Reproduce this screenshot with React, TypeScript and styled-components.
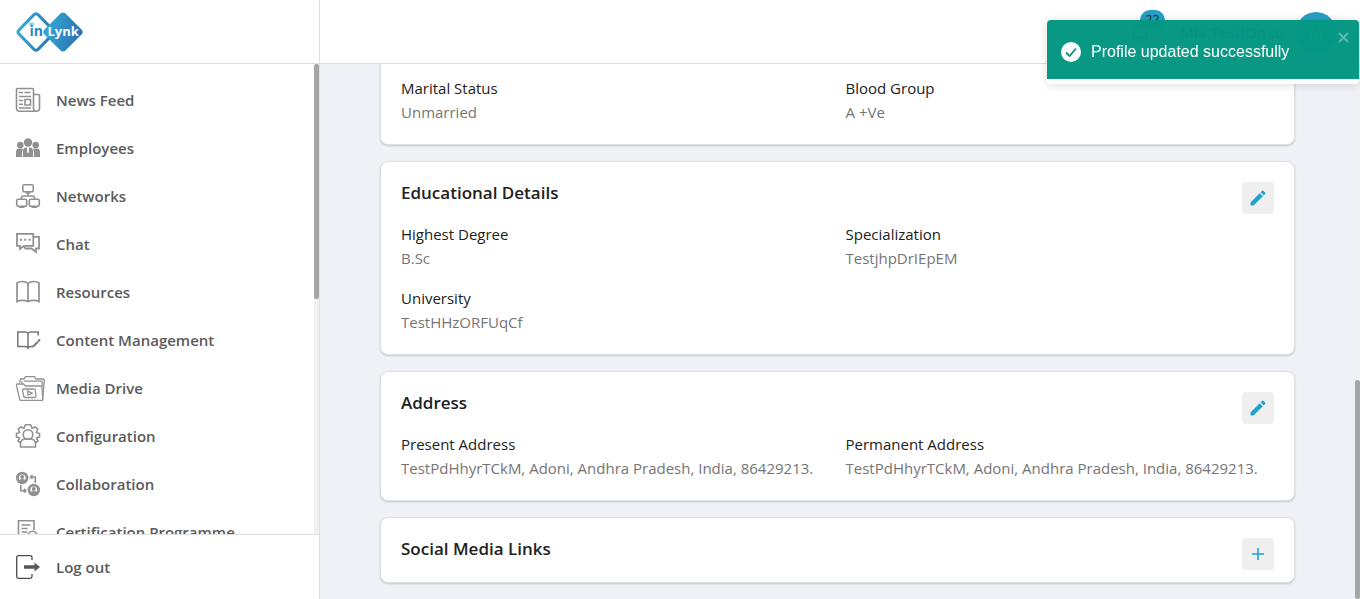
import React from 'react';
import styled, { createGlobalStyle } from 'styled-components';

const GlobalStyle = createGlobalStyle`
  *, *::before, *::after { box-sizing: border-box; }
  body {
    margin: 0;
    font-family: 'Open Sans', 'Noto Sans', sans-serif;
    font-size: 15px;
    line-height: 24px;
    color: #212121;
    background: #f0f1f6;
  }
  h2, p, dl, dt, dd, ul { margin: 0; padding: 0; }
`;

const Shell = styled.div`
  display: flex;
  height: 100vh;
  overflow: hidden;
`;

const Sidebar = styled.aside`
  display: flex;
  flex-direction: column;
  flex: 0 0 320px;
  background: #fff;
  border-right: 1px solid #e0e0e0;
`;

const Brand = styled.a`
  display: flex;
  align-items: center;
  flex: 0 0 64px;
  padding: 0 16px;
  border-bottom: 1px solid #e0e0e0;
`;

const ScrollArea = styled.div`
  display: flex;
  flex: 1;
  min-height: 0;
`;

const Track = styled.div`
  display: flex;
  flex-direction: column;
  flex: 0 0 5px;
  background: #f1f1f1;
`;

const Thumb = styled.div<{ $share: number; $end?: boolean }>`
  height: ${(p) => p.$share}%;
  margin-top: ${(p) => (p.$end ? 'auto' : '0')};
  border-radius: 4px;
  background: #a3a6a4;
`;

const NavList = styled.ul`
  flex: 1;
  padding: 12px 0;
  overflow-y: auto;
  list-style: none;
  scrollbar-width: none;
`;

const NavLink = styled.a`
  display: flex;
  align-items: center;
  gap: 16px;
  height: 48px;
  padding: 0 16px;
  color: #5a5a5a;
  font-weight: 600;
  text-decoration: none;
`;

const NavIcon = styled.svg`
  flex: 0 0 24px;
  width: 24px;
  height: 24px;
  overflow: visible;
  fill: none;
  stroke: #919191;
  stroke-width: 1.6;
`;

const LogoutBar = styled.div`
  flex: 0 0 65px;
  padding: 8px 0;
  border-top: 1px solid #e0e0e0;
`;

const LogoutButton = styled.button`
  display: flex;
  align-items: center;
  gap: 16px;
  width: 100%;
  height: 48px;
  padding: 0 16px;
  border: 0;
  background: none;
  color: #5a5a5a;
  font: inherit;
  font-weight: 600;
`;

const Page = styled.div`
  display: flex;
  flex-direction: column;
  flex: 1;
  min-width: 0;
`;

const TopBar = styled.header`
  display: flex;
  align-items: center;
  justify-content: flex-end;
  gap: 12px;
  flex: 0 0 64px;
  padding: 0 24px;
  background: #fff;
  border-bottom: 1px solid #e0e0e0;
  font-weight: 600;
`;

const BellButton = styled.button`
  position: relative;
  display: flex;
  margin-right: 16px;
  padding: 0;
  border: 0;
  background: none;
  color: #575757;
`;

const Badge = styled.span`
  position: absolute;
  top: -10px;
  left: 12px;
  min-width: 25px;
  height: 20px;
  border-radius: 10px;
  background: #25a0c4;
  color: #212121;
  font: 12px/20px 'Open Sans', sans-serif;
  text-align: center;
`;

const Avatar = styled.span`
  width: 40px;
  height: 40px;
  border-radius: 50%;
  background: #25a0c4;
  color: #fff;
  line-height: 40px;
  text-align: center;
`;

/* Reversed column so that the view opens at the end of the profile. */
const Content = styled.main`
  display: flex;
  flex: 1;
  flex-direction: column-reverse;
  overflow-y: auto;
  scrollbar-width: none;
`;

const Cards = styled.div`
  display: flex;
  flex-direction: column;
  gap: 16px;
  padding: 16px 60px;
`;

const Card = styled.section`
  display: flex;
  flex-direction: column;
  gap: 16px;
  padding: 20px;
  border: 1px solid #dedfe1;
  border-radius: 8px;
  background: #fff;
  box-shadow: 0 1px 2px rgba(0, 0, 0, 0.18);
`;

const CardHeader = styled.div`
  display: flex;
  align-items: flex-start;
  justify-content: space-between;
  height: 24px;
`;

const CardTitle = styled.h2`
  font-size: 17px;
  font-weight: 600;
  line-height: 22px;
`;

const IconButton = styled.button`
  display: grid;
  place-items: center;
  width: 32px;
  height: 32px;
  padding: 0;
  border: 0;
  border-radius: 4px;
  background: #efefef;
  color: #23a2c8;
`;

const Fields = styled.dl`
  display: grid;
  grid-template-columns: 1fr 1fr;
  gap: 16px;
`;

const Value = styled.dd`
  color: #757575;
`;

const Toast = styled.div`
  position: fixed;
  top: 20px;
  right: 1px;
  width: 312px;
  overflow: hidden;
  border-radius: 4px;
  box-shadow: 0 1px 10px rgba(0, 0, 0, 0.14);
`;

const ToastBody = styled.div`
  display: flex;
  align-items: center;
  gap: 10px;
  height: 59px;
  padding: 4px 14px 0;
  background: rgba(4, 150, 130, 0.985);
  color: #fff;
  font: 16px/24px 'Liberation Sans', Arial, sans-serif;
`;

const ToastProgress = styled.div`
  height: 5px;
  background: #fff;
`;

const CloseButton = styled.button`
  position: absolute;
  top: 12px;
  right: 10px;
  display: flex;
  padding: 0;
  border: 0;
  background: none;
  color: #5fb9ad;
`;

const Logo = () => (
  <svg width="68" height="42" viewBox="0 0 68 42" role="img" aria-label="inLynk">
    <defs>
      <linearGradient id="brand" x1="0" y1="0" x2="1" y2="0.3">
        <stop offset="0" stopColor="#38b0da" />
        <stop offset="1" stopColor="#2a75b3" />
      </linearGradient>
    </defs>
    <path d="M18 3.600Q20 1.800 22 3.600L37 19Q39 21 37 23L22 38.400Q20 40.200 18 38.400L3 23Q1 21 3 19Z" fill="#fff" stroke="url(#brand)" strokeWidth="3" />
    <path d="M44.500 2.600Q47 .4 49.500 2.600L65.500 18.400Q68 21 65.500 23.600L49.500 39.400Q47 41.600 44.500 39.400L28.500 23.600Q26 21 28.500 18.400Z" fill="url(#brand)" />
    <text x="13.500" y="25" fill="#2a86bf" fontFamily="Open Sans, sans-serif" fontSize="14" fontWeight="700">in</text>
    <text x="31.500" y="25" fill="#fff" fontFamily="Open Sans, sans-serif" fontSize="13" fontWeight="700">Lynk</text>
    <path d="M13.500 11l4 4M17.500 11l-4 4M12.500 13h6" stroke="#49b2dc" strokeWidth=".8" />
  </svg>
);

const icons: Record<string, React.ReactNode> = {
  'News Feed': (
    <>
      <path d="M17.500 21V1.500q0-1-1-1H1.500q-1 0-1 1V20q0 3.300 3 3.300h17q3 0 3-3V7.500q0-1-1-1h-5M17.500 20q0 3.300 2.800 3.300" />
      <path d="M3 4.500h4M8.500 4.500h6M3 8.500h12M3 12.500h4M3 16.200h4M3 20h12M9 11.500h5.500v5.500H9z" />
    </>
  ),
  Employees: (
    <g fill="#919191" stroke="none">
      <circle cx="12" cy="6.500" r="4.200" />
      <circle cx="4.300" cy="9" r="3.300" />
      <circle cx="19.700" cy="9" r="3.300" />
      <path d="M0 21v-5q0-3.500 3-3.500h2.500q1.500 0 1.500 1-1 1-1 3V21zM24 21v-5q0-3.500-3-3.500h-2.500q-1.500 0-1.500 1 1 1 1 3V21z" />
      <path d="M7 21v-5.500q0-4 3-4h.8L11.300 17h1.400l.5-5.500h.8q3 0 3 4V21z" />
    </g>
  ),
  Networks: (
    <>
      <rect x="6.800" y=".8" width="10.500" height="7" rx="1.500" />
      <rect x=".7" y="15.200" width="10" height="7" rx="1.500" />
      <rect x="13.300" y="15.200" width="10" height="7" rx="1.500" />
      <path d="M12 8v4M9.500 9h5M5.500 15v-1q0-2 2-2h9q2 0 2 2v1M3 23.300h5.500M15.500 23.300h5.500" />
    </>
  ),
  Chat: (
    <g strokeWidth="1.800">
      <path d="M1 1.800h16.300v12H8L4 17v-3.200H1z" />
      <path d="M17.500 4.800h5.500v11.700h-3V20l-4.500-3.500H9.500L8 15" />
      <path d="M3.800 7.800h2M8.200 7.800h2M12.600 7.800h2" strokeWidth="2" />
    </g>
  ),
  Resources: (
    <path strokeWidth="1.700" d="M12 3.500Q10 1.500 6.500 1.500T1 3.200v18.300q2-1.200 5.500-1.200t5.500 1.200q2.200-1.200 5.700-1.200t5.300 1.200V3.200q-2-1.700-5.500-1.700T12 3.500zV21" />
  ),
  'Content Management': (
    <g stroke="#767676" strokeWidth="1.500">
      <path d="M12 5.500Q11 4 9 4H1.800v14.500H9q2 0 3 1.700 1-1.700 3-1.700M12 21V5.500Q13 4 15 4h7.200v3.500" />
      <path d="M15.200 18.800l2.300-.6 4.200-4.200M22 13.500l2-2" strokeWidth="2" />
    </g>
  ),
  'Media Drive': (
    <g strokeWidth="1.300">
      <path d="M4 24.300h22.500L28.300 4.500q0-1.500-1.500-1.500H20l-1.500-2.300H9.500L8 3H4.500L3.800 6.500" />
      <path d="M4 24.300L.5 10q-.2-2 1-2h6L9.500 10h15q1.300 0 1.500 1.500l.8 12.500M8 5.200h17.500q.7 0 .7 1v4M5.500 7l1-1.800" />
      <path d="M7.500 13h10.500q1 0 1.200 1l.8 6q0 1.500-1.200 1.500H9q-1 0-1.200-1L6.500 14.300q0-1.300 1-1.300zM11.500 15l.7 4 4-1.700z" />
    </g>
  ),
  Configuration: (
    <>
      <path d="M4 18.500L2 17l1.500-3-3-1V9.500l3-1L2.300 5.200l2.500-2.300L8 4.200 9.500.8h5L16 4.200l3.200-1.300 2.500 2.300-1.200 3.300 3 1V13l-3 1 1.500 3-2 1.500" />
      <circle cx="12" cy="10.500" r="4.800" />
      <path d="M4.500 23V20q0-4.500 4.500-5h6q4.500.5 4.500 5v3z" />
    </>
  ),
  Collaboration: (
    <>
      <circle cx="6.200" cy="6" r="4.800" strokeWidth="2.800" />
      <circle cx="17.800" cy="18" r="4.800" strokeWidth="2.800" />
      <g fill="#919191" stroke="none">
        <circle cx="6.200" cy="5" r="2" />
        <path d="M2.500 10q0-3 3.700-3t3.700 3l-1 1H3.500z" />
        <circle cx="17.800" cy="17" r="2" />
        <path d="M14 22q0-3 3.800-3t3.700 3l-1 1H15z" />
      </g>
      <path d="M4.800 13v5.800h4.500M7.800 16.800l2 2-2 2M19.300 11V5h-4.500M16.500 3l-2 2 2 2" />
    </>
  ),
  'Certification Programme': (
    <>
      <path d="M10 21.500H2.500V.8h15.500V10M5.500 5h9M5.500 8.500h6M5.500 12h6M5.500 15.500h4" />
      <circle cx="16.500" cy="15.800" r="4.500" />
      <path d="M14.500 16l1.500 1.500 2.500-3M14 20v4l2.500-1.500L19 24v-4" />
    </>
  ),
};

const PencilIcon = () => (
  <svg width="20" height="20" viewBox="0 0 24 24" fill="currentColor" aria-hidden="true">
    <path d="M3 17.250V20q0 1 1 1h2.750L17.810 9.940l-3.750-3.750L3 17.250zM20.710 7.040a1 1 0 0 0 0-1.410l-2.340-2.340a1 1 0 0 0-1.410 0l-1.830 1.830 3.750 3.750 1.830-1.830z" />
  </svg>
);

const PlusIcon = () => (
  <svg width="12" height="12" viewBox="0 0 12 12" stroke="currentColor" strokeWidth="1.600" aria-hidden="true">
    <path d="M6 0v12M0 6h12" />
  </svg>
);

type Section = { title?: string; add?: boolean; fields: [string, string][] };

const sections: Section[] = [
  { fields: [['Marital Status', 'Unmarried'], ['Blood Group', 'A +Ve']] },
  {
    title: 'Educational Details',
    fields: [
      ['Highest Degree', 'B.Sc'],
      ['Specialization', 'TestjhpDrIEpEM'],
      ['University', 'TestHHzORFUqCf'],
    ],
  },
  {
    title: 'Address',
    fields: [
      ['Present Address', 'TestPdHhyrTCkM, Adoni, Andhra Pradesh, India, 86429213.'],
      ['Permanent Address', 'TestPdHhyrTCkM, Adoni, Andhra Pradesh, India, 86429213.'],
    ],
  },
  { title: 'Social Media Links', add: true, fields: [] },
];

export default function App() {
  return (
    <>
      <GlobalStyle />
      <Shell>
        <Sidebar>
          <Brand href="#home"><Logo /></Brand>
          <ScrollArea as="nav">
            <NavList>
              {Object.entries(icons).map(([label, icon]) => (
                <li key={label}>
                  <NavLink href="#">
                    <NavIcon viewBox="0 0 24 24" aria-hidden="true">{icon}</NavIcon>
                    {label}
                  </NavLink>
                </li>
              ))}
            </NavList>
            <Track><Thumb $share={50} /></Track>
          </ScrollArea>
          <LogoutBar>
            <LogoutButton type="button">
              <NavIcon viewBox="0 0 24 24" aria-hidden="true">
                <path stroke="#4a4a4a" d="M16 5V2.500Q16 .7 14.200.7H2.500Q.7.700.7 2.500v19q0 1.800 1.800 1.800h11.700q1.800 0 1.800-1.800V19" strokeWidth="1.300" />
                <path d="M8 10.300h10.500V7.500L24 12l-5.500 4.500v-2.800H8z" fill="#575757" stroke="none" />
              </NavIcon>
              Log out
            </LogoutButton>
          </LogoutBar>
        </Sidebar>
        <Page>
          <TopBar>
            <BellButton type="button" aria-label="Notifications">
              <svg width="24" height="24" viewBox="0 0 24 24" fill="none" stroke="currentColor" strokeWidth="2" aria-hidden="true">
                <path d="M4 18h16M6 18v-7a6 6 0 0 1 12 0v7M10 21h4" />
              </svg>
              <Badge>22</Badge>
            </BellButton>
            <span>Mia TestjOqxu</span>
            <Avatar>M</Avatar>
          </TopBar>
          <ScrollArea>
            <Content>
              <Cards>
                {sections.map(({ title, add, fields }, i) => (
                  <Card key={i}>
                    {title && (
                      <CardHeader>
                        <CardTitle>{title}</CardTitle>
                        <IconButton type="button" aria-label={`${add ? 'Add' : 'Edit'} ${title}`}>
                          {add ? <PlusIcon /> : <PencilIcon />}
                        </IconButton>
                      </CardHeader>
                    )}
                    {fields.length > 0 && (
                      <Fields>
                        {fields.map(([label, value]) => (
                          <div key={label}>
                            <dt>{label}</dt>
                            <Value>{value}</Value>
                          </div>
                        ))}
                      </Fields>
                    )}
                  </Card>
                ))}
              </Cards>
            </Content>
            <Track><Thumb $share={41} $end /></Track>
          </ScrollArea>
        </Page>
      </Shell>
      <Toast role="alert">
        <ToastBody>
          <svg width="20" height="20" viewBox="0 0 20 20" aria-hidden="true">
            <circle cx="10" cy="10" r="10" fill="#fff" />
            <path d="M5 10.500l3.500 3.500L15 6.500" fill="none" stroke="#009682" strokeWidth="1.800" />
          </svg>
          Profile updated successfully
        </ToastBody>
        <ToastProgress />
        <CloseButton type="button" aria-label="Close">
          <svg width="11" height="11" viewBox="0 0 11 11" stroke="currentColor" strokeWidth="2" aria-hidden="true">
            <path d="M1 1l9 9M10 1l-9 9" />
          </svg>
        </CloseButton>
      </Toast>
    </>
  );
}
